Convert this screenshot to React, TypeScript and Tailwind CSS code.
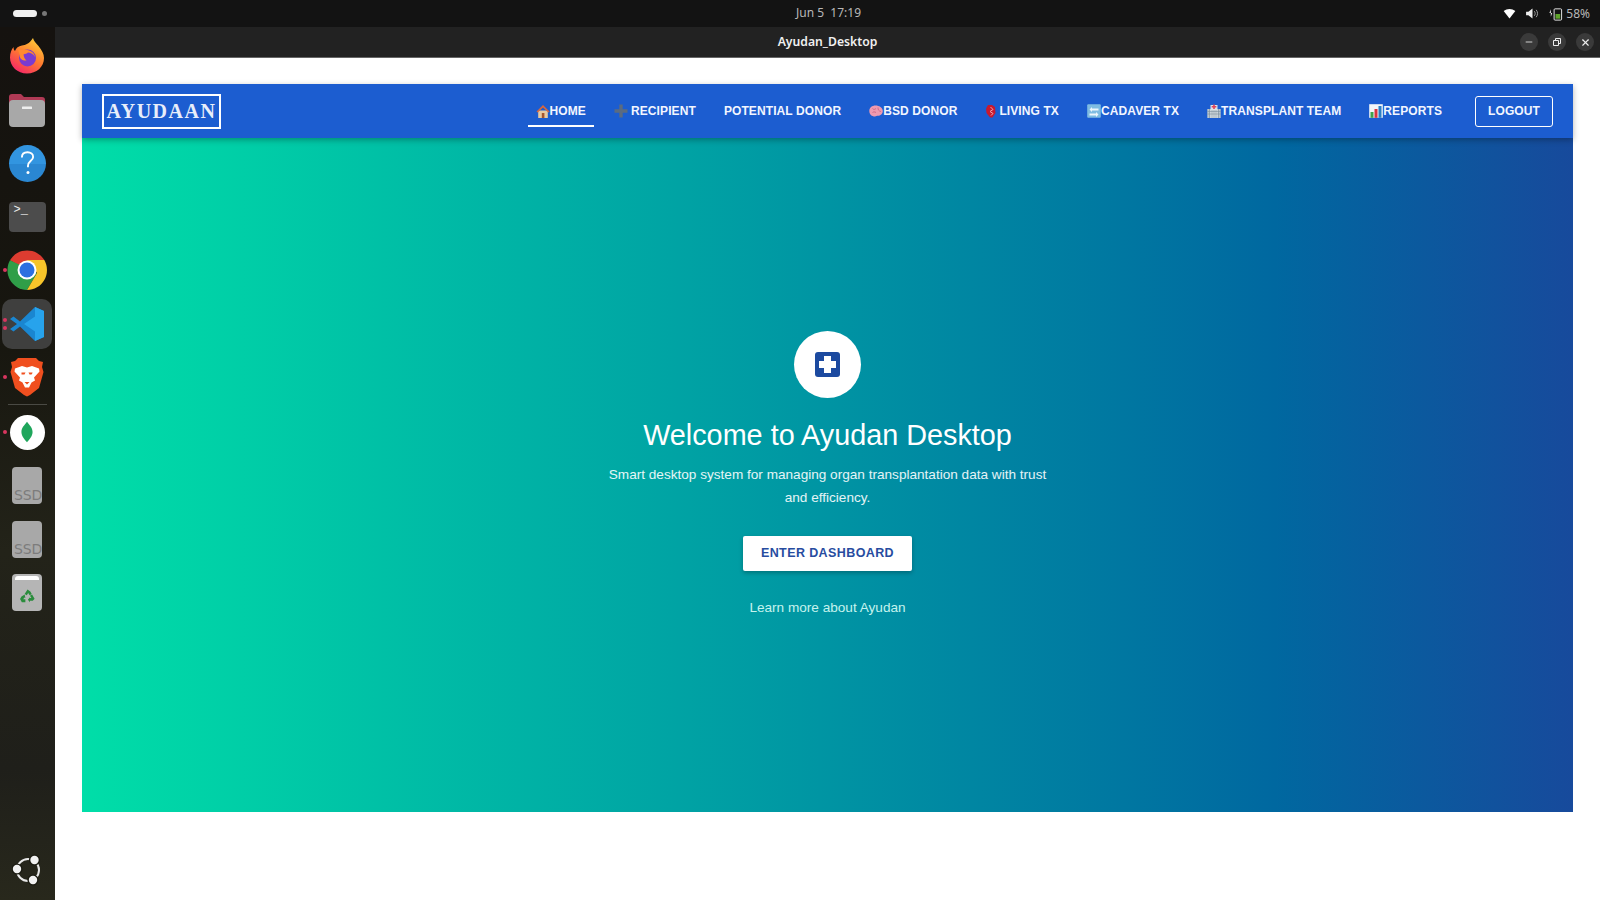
import { ReactNode } from 'react'
import { Minus, X } from 'lucide-react'

const font = { fontFamily: '"Liberation Sans", Arial, sans-serif' }

function HomeEmoji() {
  return (
    <svg viewBox="0 0 14 14" className="w-[14px] h-[14px] shrink-0">
      <path d="M2.200 6.500h9.600V14H2.200z" fill="#e8c9a0" />
      <path d="M0.500 7.500 7 1l6.500 6.500-1.200 1L7 3.400 1.700 8.500z" fill="#d9663c" />
      <path d="M5.800 9h2.600v5H5.800z" fill="#a5562e" />
    </svg>
  )
}

function CrossEmoji() {
  return (
    <svg viewBox="0 0 14 14" className="w-[14px] h-[14px] shrink-0">
      <path d="M5.300 0.500h3.400v4.800h4.800v3.400H8.700v4.800H5.300V8.700H0.500V5.300h4.800z" fill="#5b6b80" />
    </svg>
  )
}

function BrainEmoji() {
  return (
    <svg viewBox="0 0 14 14" className="w-[14px] h-[14px] shrink-0">
      <path d="M0.300 7c0-3.300 2.700-5.500 6.200-5.500S13.800 3.700 13.800 7c0 2.800-2.300 4.800-5 4.800-1 0-1.500.7-2.800.7C2.700 12.500.3 10.300.3 7z" fill="#ee9ab0" />
      <path d="M3.500 4.500c1 1.200 2.200 1.200 3.500 0M3.500 8.500c1-.8 2.200-.8 3.500 0M9 3.500c0 2.200.5 3.500 3 4" stroke="#c9607f" strokeWidth=".8" fill="none" />
    </svg>
  )
}

function HeartEmoji() {
  return (
    <svg viewBox="0 0 14 14" className="w-[14px] h-[14px] shrink-0">
      <path d="M3 1h4l3 2 .5 6L7.500 13.500H5L1.500 9 1 4.500z" fill="#c8192e" />
      <path d="M5.500 3 8 5.500 5 7.500 8 9.500 6 11.500" stroke="#f4a0a8" strokeWidth="1" fill="none" />
    </svg>
  )
}

function SwapEmoji() {
  return (
    <svg viewBox="0 0 14 14" className="w-[14px] h-[14px] shrink-0">
      <rect x="0.200" y="0.200" width="13.600" height="13.600" rx="1" fill="#7fbce2" />
      <path d="M11.500 4.500H5V3L2.500 5.500 5 8V6.500h6.500zM2.500 9.500H9V8l2.500 2.500L9 13v-1.500H2.500z" fill="#eef6fb" />
    </svg>
  )
}

function HospitalEmoji() {
  return (
    <svg viewBox="0 0 14 14" className="w-[14px] h-[14px] shrink-0">
      <path d="M0.300 5h13.400v9H0.300z" fill="#b9c6cf" />
      <path d="M3.500 1h7v13h-7z" fill="#dbe3e6" />
      <path d="M6.200 0.500h1.600v1.500h1.500v1.600H7.800v1.500H6.200V3.600H4.700V2h1.500z" fill="#e0435a" />
      <path d="M0.300 7.500h13.400M0.300 10h13.400M5 6v8M7 6v8M9 6v8M2.500 5v9M11.500 5v9" stroke="#7c8f9c" strokeWidth=".6" />
    </svg>
  )
}

function ChartEmoji() {
  return (
    <svg viewBox="0 0 14 14" className="w-[14px] h-[14px] shrink-0">
      <rect x="0.200" y="0.200" width="13.600" height="13.600" fill="#f3f6f8" />
      <rect x="1.500" y="8" width="3" height="5.800" fill="#3fa34d" />
      <rect x="5.500" y="5" width="3" height="8.800" fill="#d8343f" />
      <rect x="9.500" y="2" width="3" height="11.800" fill="#2c7fc4" />
    </svg>
  )
}

function NavItem({ icon, label, active }: { icon?: ReactNode; label: string; active?: boolean }) {
  return (
    <a className={`flex items-center h-[31px] px-[8px] mx-[6px] text-[12px] font-bold tracking-[0.1px] text-[#f2f6ff] whitespace-nowrap ${active ? 'border-b-2 border-white pt-[2px]' : ''}`}>
      {icon}
      {label}
    </a>
  )
}

function Firefox() {
  return (
    <svg viewBox="0 0 36 36" className="w-[36px] h-[36px] -translate-y-[1px]">
      <defs>
        <linearGradient id="ffa" x1="0.800" y1="0" x2="0.200" y2="1">
          <stop offset="0" stopColor="#ffd23a" />
          <stop offset="0.500" stopColor="#ff7a2f" />
          <stop offset="1" stopColor="#f5216c" />
        </linearGradient>
      </defs>
      <path d="M24 0c.5 3 3 5 5.500 8C33 12.500 35 16 35 20c0 9-7.500 15.500-17 15.500S1 28.500 1 19.500C1 15 2.500 11.500 4.500 9c0 2 .5 3 1.500 4 1-3 3.500-5 7-5.500 3.500-.5 7-1.500 11-7.500z" fill="url(#ffa)" />
      <circle cx="18.500" cy="20" r="8.500" fill="#7b3bd0" />
      <path d="M9 11c3 1 6 1 8 1 4 0 8 2 9 7-2-3.500-5-4.500-7-4.500-1 1-3 1.500-4.500 2 .5 2 .5 4 3 6-4 .5-7-2-7-5.500 0-1.500-1-3.500-1.500-6z" fill="#ff8a2e" />
    </svg>
  )
}

function Files() {
  return (
    <svg viewBox="0 0 38 36" className="w-[38px] h-[36px]">
      <path d="M1 5a3 3 0 0 1 3-3h9l3 3h18a3 3 0 0 1 3 3v8H1z" fill="#b03a55" />
      <rect x="1" y="8" width="36" height="27" rx="4" fill="#a8a8a8" />
      <rect x="14" y="14.500" width="10" height="2.500" rx="0.500" fill="#eeeeee" />
    </svg>
  )
}

function Help() {
  return (
    <div className="w-[37px] h-[37px] rounded-full bg-[linear-gradient(#3295e0_50%,#2a87d2_50%)] flex items-center justify-center">
      <svg viewBox="0 0 16 26" className="w-[15px] h-[26px]">
        <path d="M2 7c0-3.500 2.500-5.500 6-5.500S14 3.500 14 6.500c0 4-5.500 4.500-5.500 9.500v1.500" fill="none" stroke="#ffffff" strokeWidth="2" />
        <circle cx="8.500" cy="23" r="1.600" fill="#ffffff" />
      </svg>
    </div>
  )
}

function Terminal() {
  return (
    <div className="w-[37px] h-[30px] rounded-[4px] bg-[#4c4c4c] relative">
      <span className="absolute left-[5px] top-[1px] text-[12px] leading-[14px] text-[#eeeeee]" style={{ fontFamily: '"Liberation Mono", monospace' }}>&gt;_</span>
    </div>
  )
}

function Chrome() {
  return (
    <svg viewBox="0 0 40 40" className="w-[40px] h-[40px]">
      <path d="M20 20 3 10.200A20 20 0 0 1 37.300 10z" fill="#dd3c30" />
      <path d="M3 10.200A20 20 0 0 0 20 40l10-17z" fill="#2f9e48" />
      <path d="M37.300 10H20l10 13-10 17A20 20 0 0 0 37.300 10z" fill="#f7c52a" />
      <circle cx="20" cy="20" r="9.500" fill="#ffffff" />
      <circle cx="20" cy="20" r="7.500" fill="#2c6fe0" />
    </svg>
  )
}

function VsCode() {
  return (
    <div className="w-[50px] h-[50px] rounded-[10px] bg-[#4a4a4a]/80 flex items-center justify-center">
      <svg viewBox="0 0 36 36" className="w-[36px] h-[36px]">
        <path d="M26 1 35 5v26l-9 4-15-14.500-6.500 5L1 23l7-5-7-5 3.500-2.500 6.500 5z" fill="#1a86d0" />
        <path d="M26 1 35 5v26l-9 4zm0 9.500L15 18l11 7.500z" fill="#27a3ec" />
      </svg>
    </div>
  )
}

function Brave() {
  return (
    <svg viewBox="0 0 34 40" className="w-[34px] h-[40px]">
      <path d="M8 1h18l3 3 4 1-1 5 1.500 5-4.500 16-9 7-3 1.500-3-1.500-9-7L.5 15 2 10 1 5l4-1z" fill="#f04f1f" />
      <path d="M5 11.500 12 9l5 1.500L22 9l7 2.500.5 3-5.500 6 1 3-3.500 2-2.500 5h-4l-2.500-5L9 23.500l1-3-5.500-6z" fill="#ffffff" />
      <path d="M11.500 15.500h4l-1 2h-3zM18.500 15.500h4v.5l-1 1.500h-2zM14.500 25h5L17 27.500z" fill="#f04f1f" />
    </svg>
  )
}

function Mongo() {
  return (
    <div className="w-[35px] h-[35px] rounded-full bg-white flex items-center justify-center">
      <svg viewBox="0 0 14 24" className="w-[12px] h-[22px]">
        <path d="M7 0c3 4 6.500 7 6.500 12S9.500 21 7 24C4.500 21 .5 17 .5 12S4 4 7 0z" fill="#1fa65c" />
      </svg>
    </div>
  )
}

function Ssd() {
  return (
    <div className="w-[30px] h-[37px] rounded-[4px] bg-[#a8a8a8] flex items-end justify-end overflow-hidden">
      <span className="text-[14px] leading-[18px] text-[#7c7c7c] tracking-[-0.2px]" style={{ fontFamily: '"DejaVu Sans", sans-serif' }}>SSD</span>
    </div>
  )
}

function Trash() {
  return (
    <div className="w-[30px] h-[37px] rounded-[4px] bg-[#b5b5b5] relative flex items-end justify-center pb-[6px]">
      <div className="absolute top-[2px] left-[3px] right-[3px] h-[4px] bg-white rounded-t-[3px]" />
      <svg viewBox="0 0 24 24" className="w-[17px] h-[17px]">
        <path d="M12 2 8 8.500l3 1.800 2-3.300 2 3.300 3-1.800-2-3.500zM3.500 12l-2 3.500L4 20h5v-4H6l1.500-2.500L9 14l-1-5zM22 15l-3.500-6-3 1.800 2 3.200h-2v-1l-3 3.500 3 3.500v-2h4z" fill="#2a8c3c" />
      </svg>
    </div>
  )
}

function UbuntuLogo() {
  return (
    <svg viewBox="0 0 32 32" className="w-[32px] h-[32px]">
      <circle cx="16" cy="16" r="11" fill="none" stroke="#e8e8e8" strokeWidth="2" />
      <circle cx="5" cy="15" r="5.600" fill="#1b1b12" />
      <circle cx="22.500" cy="6" r="5.600" fill="#1b1b12" />
      <circle cx="21" cy="26" r="5.600" fill="#1b1b12" />
      <circle cx="5" cy="15" r="4.200" fill="#f2f2f2" />
      <circle cx="22.500" cy="6" r="4.200" fill="#f2f2f2" />
      <circle cx="21" cy="26" r="4.200" fill="#f2f2f2" />
    </svg>
  )
}

function DockSlot({ children, dots = 0 }: { children: ReactNode; dots?: number }) {
  return (
    <div className="relative h-[53.4px] pr-[1px] flex items-center justify-center">
      {dots > 0 && (
        <div className="absolute left-[3px] top-0 bottom-0 flex flex-col justify-center gap-[4px]">
          {dots > 1 && <span className="w-[4px] h-[4px] rounded-full bg-[#d8365f]" />}
          <span className="w-[4px] h-[4px] rounded-full bg-[#d8365f]" />
        </div>
      )}
      {children}
    </div>
  )
}

export default function App() {
  return (
    <div className="w-[1600px] h-[900px] overflow-hidden flex flex-col bg-white" style={font}>
      <header className="h-[27px] shrink-0 bg-[#131313] flex items-center justify-between pl-[13px] pr-[10px] relative" style={{ fontFamily: '"Noto Sans", sans-serif' }}>
        <div className="flex items-center gap-[5px]">
          <span className="w-[24px] h-[7px] rounded-full bg-[#f0f0f0]" />
          <span className="w-[5px] h-[5px] rounded-full bg-[#777777]" />
        </div>
        <span className="absolute left-[796px] top-[5px] text-[12px] leading-[16px] text-[#b8b8b8]">Jun 5&nbsp;&nbsp;17:19</span>
        <div className="flex items-center text-[12px] text-[#b8b8b8]">
          <svg viewBox="0 0 14 12" className="w-[13px] h-[10px] mr-[10px]"><path d="M0 2.500C4-.8 10-.8 14 2.500L7 11.500z" fill="#ffffff" /></svg>
          <svg viewBox="0 0 14 12" className="w-[13px] h-[11px] mr-[9px]"><path d="M0 4h2.500L7 .5v11L2.500 8H0z" fill="#eeeeee" /><path d="M9 3.500c1.200 1.500 1.200 3.500 0 5M11 2c2 2.500 2 5.500 0 8" stroke="#aaaaaa" fill="none" /></svg>
          <svg viewBox="0 0 16 14" className="w-[15px] h-[14px] mr-[3px]">
            <path d="M3 2 1.500 6H3v4l1.500-4H3z" fill="#eeeeee" />
            <rect x="6.500" y="1.500" width="8" height="12" rx="1" fill="none" stroke="#eeeeee" />
            <rect x="8" y="7" width="5" height="5" fill="#5fa32a" />
          </svg>
          <span>58%</span>
        </div>
      </header>

      <div className="flex-1 flex min-h-0">
        <aside className="w-[55px] shrink-0 pt-[3px] flex flex-col bg-[linear-gradient(180deg,#15120f_0%,#17160f_35%,#232319_60%,#1f1f1a_85%,#28281c_100%)]">
          <DockSlot><Firefox /></DockSlot>
          <DockSlot><Files /></DockSlot>
          <DockSlot><Help /></DockSlot>
          <DockSlot><Terminal /></DockSlot>
          <DockSlot dots={1}><Chrome /></DockSlot>
          <DockSlot dots={2}><VsCode /></DockSlot>
          <DockSlot dots={1}><Brave /></DockSlot>
          <div className="mx-[8px] mb-[1px] h-px bg-[#4a4a44]" />
          <DockSlot dots={1}><Mongo /></DockSlot>
          <DockSlot><Ssd /></DockSlot>
          <DockSlot><Ssd /></DockSlot>
          <DockSlot><Trash /></DockSlot>
          <div className="mt-auto mb-[14px] flex justify-center"><UbuntuLogo /></div>
        </aside>

        <div className="flex-1 flex flex-col min-w-0">
          <div className="h-[31px] shrink-0 bg-[#222222] border-b border-[#666666] flex items-center justify-end relative pr-[6px] gap-[10px]">
            <span className="absolute left-0 right-0 text-center text-[12.2px] font-semibold text-[#f0f0f0]" style={{ fontFamily: '"Noto Sans", sans-serif' }}>Ayudan_Desktop</span>
            {[0, 1, 2].map((i) => (
              <span key={i} className="relative w-[18px] h-[18px] rounded-full bg-[#3a3a3a] flex items-center justify-center text-[#eeeeee]">
                {i === 0 && <Minus size={10} strokeWidth={2} />}
                {i === 1 && (
                  <svg viewBox="0 0 8 8" className="w-[8px] h-[8px]">
                    <path d="M2.500 2V.5h5v5H6M.5 2.500h5v5h-5z" fill="none" stroke="#eeeeee" />
                  </svg>
                )}
                {i === 2 && <X size={11} strokeWidth={2.5} />}
              </span>
            ))}
          </div>

          <main className="flex-1 pl-[27px] pr-[27px] pt-[26px] bg-white">
            <nav className="relative z-10 h-[54px] bg-[#1c5dd0] shadow-[0_2px_6px_rgba(0,0,0,0.3)] flex items-center justify-between pl-[20px] pr-[20px]">
              <div className="border-2 border-white h-[35px] w-[119px] flex items-center justify-center text-[20px] font-bold tracking-[1.5px] text-[#e8eefa]" style={{ fontFamily: '"Liberation Serif", serif' }}>AYUDAAN</div>
              <div className="flex items-center">
                <NavItem active icon={<HomeEmoji />} label="HOME" />
                <NavItem icon={<><CrossEmoji /><span className="w-[3px]" /></>} label="RECIPIENT" />
                <NavItem label="POTENTIAL DONOR" />
                <NavItem icon={<BrainEmoji />} label="BSD DONOR" />
                <NavItem icon={<HeartEmoji />} label="LIVING TX" />
                <NavItem icon={<SwapEmoji />} label="CADAVER TX" />
                <NavItem icon={<HospitalEmoji />} label="TRANSPLANT TEAM" />
                <NavItem icon={<ChartEmoji />} label="REPORTS" />
                <button className="ml-[19px] w-[78px] h-[31px] border border-white rounded-[3px] text-[12px] font-bold tracking-[0.1px] text-[#f2f6ff]">LOGOUT</button>
              </div>
            </nav>

            <section className="h-[674px] bg-[linear-gradient(90deg,#00dea8_0%,#0068a0_80%,#174a9c_100%)] flex flex-col items-center text-white">
              <div className="mt-[193px] w-[67px] h-[67px] rounded-full bg-white flex items-center justify-center">
                <div className="w-[25px] h-[25px] rounded-[3px] bg-[#1c4aa0] relative">
                  <span className="absolute left-[9px] top-[4px] w-[7px] h-[17px] bg-white" />
                  <span className="absolute left-[4px] top-[9px] w-[17px] h-[7px] bg-white" />
                </div>
              </div>
              <h1 className="mt-[19px] text-[28.8px] leading-[36px] font-normal">Welcome to Ayudan Desktop</h1>
              <p className="mt-[10px] w-[450px] text-center text-[13.6px] leading-[23.4px] text-white/90">Smart desktop system for managing organ transplantation data with trust and efficiency.</p>
              <button className="mt-[26px] w-[169px] h-[35px] bg-white rounded-[2px] shadow-[0_2px_4px_rgba(0,0,0,0.25)] text-[12.5px] font-bold tracking-[0.4px] text-[#274c9f]">ENTER DASHBOARD</button>
              <a className="mt-[27px] text-[13.6px] leading-[20px] text-[#c5f3ee]">Learn more about Ayudan</a>
            </section>
          </main>
        </div>
      </div>
    </div>
  )
}
